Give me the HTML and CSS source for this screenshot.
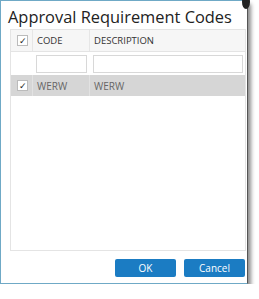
FILE: index.html
```html
<!DOCTYPE html>
<html lang="en">

<head>
    <meta charset="UTF-8">
    <title>Approval Requirement Codes</title>
    <link rel="stylesheet" href="styles.css">
</head>

<body>
    <div class="dialog">
        <span class="close-edge"></span>
        <h2 class="title">Approval Requirement Codes</h2>
        <div class="grid">
            <div class="row header">
                <div class="cell check"><span class="box">&#10003;</span></div>
                <div class="cell code">CODE</div>
                <div class="cell desc">DESCRIPTION</div>
            </div>
            <div class="row filter">
                <div class="cell check"></div>
                <div class="cell code"><input type="text"></div>
                <div class="cell desc"><input type="text"></div>
            </div>
            <div class="row data selected">
                <div class="cell check"><span class="box">&#10003;</span></div>
                <div class="cell code">WERW</div>
                <div class="cell desc">WERW</div>
            </div>
        </div>
        <div class="footer">
            <button class="btn">OK</button>
            <button class="btn">Cancel</button>
        </div>
    </div>
</body>

</html>
```

FILE: styles.css
```css
* {
    box-sizing: border-box;
    margin: 0;
    padding: 0;
}

body {
    background: #fff;
    font-family: "Open Sans", Arial, sans-serif;
}

.dialog {
    position: relative;
    display: flex;
    flex-direction: column;
    width: 248px;
    height: 284px;
    background: #fff;
    border: 1px solid #6fa9c6;
    border-right: 1px solid #555;
    box-shadow: 3px 4px 4px rgba(0, 0, 0, 0.45);
}

.close-edge {
    position: absolute;
    top: -6px;
    right: -3px;
    width: 8px;
    height: 14px;
    border-radius: 50%;
    background: #222;
}

.title {
    font-weight: normal;
    font-size: 16.4px;
    color: #222;
    padding: 6px 0 0 7px;
    height: 28px;
    line-height: 20px;
}

.grid {
    margin-left: 9px;
    width: 236px;
    height: 222px;
    border: 1px solid #e4e4e4;
}

.row {
    display: flex;
    height: 22px;
}

.cell {
    display: flex;
    align-items: center;
    font-size: 9.5px;
    color: #333;
    padding-left: 4px;
    border-right: 1px solid #e6e6e6;
}

.cell.check {
    width: 22px;
    padding-left: 6px;
}

.cell.code {
    width: 57px;
}

.cell.desc {
    flex: 1;
    border-right: none;
}

.header {
    background: #f6f6f6;
    border-bottom: 1px solid #e4e4e4;
}

.filter {
    height: 23px;
}

.filter .cell {
    border-right: none;
    padding: 0 3px;
}

.filter .cell.desc {
    padding-right: 2px;
}

.filter input {
    width: 100%;
    height: 18px;
    border: 1px solid #d8d8d8;
}

.data {
    height: 21px;
}

.data .cell {
    color: #666;
    font-size: 10px;
    border-right: 1px solid #e2e2e2;
}

.data .cell.desc {
    border-right: none;
}

.selected {
    background: #d6d6d6;
}

.box {
    display: inline-flex;
    justify-content: center;
    align-items: center;
    width: 11px;
    height: 11px;
    background: #fff;
    border: 1px solid #bbb;
    font-size: 9px;
    color: #222;
    line-height: 1;
}

.footer {
    display: flex;
    justify-content: flex-end;
    gap: 8px;
    padding: 8px 2px 0 0;
}

.btn {
    width: 61px;
    height: 18px;
    border: none;
    border-radius: 2px;
    background: #1b7cc3;
    color: #fff;
    font-family: "Open Sans", Arial, sans-serif;
    font-size: 10px;
}
```
